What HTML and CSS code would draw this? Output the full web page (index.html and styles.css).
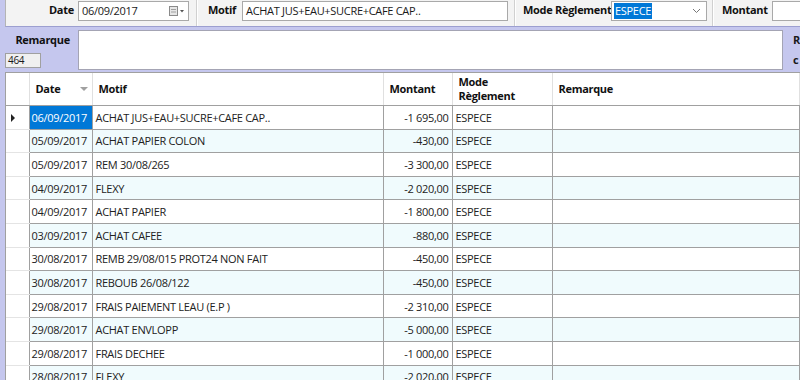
FILE: index.html
```html
<!DOCTYPE html>
<html lang="fr">
<head>
    <meta charset="UTF-8">
    <title>Dépenses</title>
    <link rel="stylesheet" href="styles.css">
</head>
<body>
    <div class="top-bar">
        <div class="field-group group-date">
            <label class="lbl lbl-date">Date</label>
            <div class="input date-input">
                <span>06/09/2017</span>
                <span class="cal-btn">
                    <svg width="16" height="10" viewBox="0 0 16 10">
                        <rect x="0.5" y="0.5" width="8" height="9" fill="#e6e6e6" stroke="#8a8a8a"/>
                        <line x1="2" y1="3.5" x2="7" y2="3.5" stroke="#a0a0a0"/>
                        <line x1="2" y1="6" x2="7" y2="6" stroke="#a0a0a0"/>
                        <path d="M11 4 L15 4 L13 6.5 Z" fill="#555"/>
                    </svg>
                </span>
            </div>
        </div>
        <div class="field-group group-motif">
            <label class="lbl">Motif</label>
            <div class="input motif-input">ACHAT JUS+EAU+SUCRE+CAFE CAP..</div>
        </div>
        <div class="field-group group-mode">
            <label class="lbl">Mode Règlement</label>
            <div class="input mode-select">
                <span class="selected-text">ESPECE</span>
                <svg class="chevron" width="9" height="6" viewBox="0 0 9 6">
                    <path d="M1 1 L4.5 4.5 L8 1" fill="none" stroke="#777" stroke-width="1"/>
                </svg>
            </div>
        </div>
        <div class="field-group group-montant">
            <label class="lbl">Montant</label>
            <div class="input montant-input"></div>
        </div>
    </div>

    <div class="remark-row">
        <div class="remark-left">
            <label class="lbl">Remarque</label>
            <div class="count-box">464</div>
        </div>
        <div class="remark-box"></div>
        <div class="remark-right">
            <span>R</span>
            <span>c</span>
        </div>
    </div>

    <div class="grid">
        <table>
            <colgroup>
                <col class="c-sel">
                <col class="c-date">
                <col class="c-motif">
                <col class="c-montant">
                <col class="c-mode">
                <col>
            </colgroup>
            <thead>
                <tr>
                    <th></th>
                    <th class="sortable">Date<span class="sort-arrow"></span></th>
                    <th>Motif</th>
                    <th>Montant</th>
                    <th>Mode<br>Règlement</th>
                    <th>Remarque</th>
                </tr>
            </thead>
            <tbody id="rows"></tbody>
        </table>
    </div>

    <script>
        const data = [
            ['06/09/2017', 'ACHAT JUS+EAU+SUCRE+CAFE CAP..', '-1 695,00'],
            ['05/09/2017', 'ACHAT PAPIER COLON', '-430,00'],
            ['05/09/2017', 'REM 30/08/265', '-3 300,00'],
            ['04/09/2017', 'FLEXY', '-2 020,00'],
            ['04/09/2017', 'ACHAT PAPIER', '-1 800,00'],
            ['03/09/2017', 'ACHAT CAFEE', '-880,00'],
            ['30/08/2017', 'REMB 29/08/015 PROT24 NON FAIT', '-450,00'],
            ['30/08/2017', 'REBOUB 26/08/122', '-450,00'],
            ['29/08/2017', 'FRAIS PAIEMENT LEAU (E.P )', '-2 310,00'],
            ['29/08/2017', 'ACHAT ENVLOPP', '-5 000,00'],
            ['29/08/2017', 'FRAIS DECHEE', '-1 000,00'],
            ['28/08/2017', 'FLEXY', '-2 020,00']
        ];

        const tbody = document.getElementById('rows');
        data.forEach((row, i) => {
            const tr = document.createElement('tr');
            if (i % 2 === 1) tr.className = 'alt';
            const sel = i === 0 ? '<span class="row-arrow"></span>' : '';
            const dateClass = i === 0 ? 'date current' : 'date';
            tr.innerHTML = `<td class="sel">${sel}</td>` +
                `<td class="${dateClass}">${row[0]}</td>` +
                `<td>${row[1]}</td>` +
                `<td class="num">${row[2]}</td>` +
                `<td>ESPECE</td>` +
                `<td></td>`;
            tbody.appendChild(tr);
        });
    </script>
</body>
</html>
```

FILE: styles.css
```css
body {
    margin: 0;
    padding: 0;
    background: #c5c7ee;
    font-family: "Open Sans", "Noto Sans", Arial, sans-serif;
    font-size: 11px;
    letter-spacing: -0.3px;
    color: #1a1a1a;
    overflow: hidden;
    width: 800px;
    height: 380px;
}
.top-bar {
    display: flex;
    height: 27px;
    margin-left: 5px;
    background: #f3f3f3;
    border-left: 1px solid #b4b4b4;
    border-bottom: 1px solid #9c9fd0;
    box-sizing: border-box;
}
.field-group {
    display: flex;
    align-items: flex-start;
    height: 100%;
    box-sizing: border-box;
    border-right: 1px solid #d0d0d0;
    box-shadow: 1px 0 0 #ffffff;
}
.lbl {
    font-weight: bold;
    color: #111;
    line-height: 20px;
    white-space: nowrap;
}
.input {
    height: 20px;
    margin-top: 1px;
    box-sizing: border-box;
    background: #fff;
    border: 1px solid #a9a9a9;
    line-height: 18px;
    padding: 0 3px;
    white-space: nowrap;
    overflow: hidden;
}
.group-date {
    width: 191px;
    padding-left: 43px;
}
.group-date .lbl {
    width: 29px;
}
.date-input {
    width: 111px;
    display: flex;
    justify-content: space-between;
    align-items: center;
}
.cal-btn {
    display: flex;
    align-items: center;
}
.group-motif {
    width: 318px;
    padding-left: 11px;
}
.group-motif .lbl {
    width: 34px;
}
.motif-input {
    width: 266px;
}
.group-mode {
    width: 198px;
    padding-left: 8px;
}
.group-mode .lbl {
    width: 88px;
}
.mode-select {
    width: 96px;
    padding: 0 2px;
    display: flex;
    align-items: center;
    justify-content: space-between;
}
.selected-text {
    background: #0078d7;
    color: #fff;
    line-height: 16px;
    padding: 0 1px;
}
.chevron {
    margin-right: 3px;
}
.group-montant {
    flex: 1;
    padding-left: 9px;
    border-right: none;
    box-shadow: none;
}
.group-montant .lbl {
    width: 50px;
}
.montant-input {
    flex: 1;
    border-right: none;
}
.remark-row {
    display: flex;
    height: 44px;
    padding-top: 3px;
    box-sizing: border-box;
}
.remark-left {
    width: 78px;
    display: flex;
    flex-direction: column;
    justify-content: space-between;
}
.remark-left .lbl {
    text-align: right;
    padding-right: 8px;
    line-height: 16px;
    margin-top: 2px;
}
.count-box {
    width: 36px;
    height: 15px;
    margin-left: 5px;
    margin-bottom: 3px;
    box-sizing: border-box;
    background: #f0f0f0;
    border: 1px solid #a0a0a0;
    font-size: 10px;
    line-height: 13px;
    padding-left: 2px;
}
.remark-box {
    width: 706px;
    height: 40px;
    box-sizing: border-box;
    background: #fff;
    border: 1px solid #a4a4b4;
}
.remark-right {
    display: flex;
    flex-direction: column;
    padding-left: 10px;
    font-weight: bold;
    line-height: 20px;
}
.grid {
    margin-left: 5px;
    margin-top: 1px;
    background: #fff;
    border-top: 1px solid #a0a0a0;
    border-left: 1px solid #a0a0a0;
}
table {
    border-collapse: collapse;
    table-layout: fixed;
    width: 100%;
}
.c-sel { width: 23px; }
.c-date { width: 63px; }
.c-motif { width: 291px; }
.c-montant { width: 69px; }
.c-mode { width: 100px; }
th {
    height: 32px;
    text-align: left;
    font-weight: bold;
    padding: 0 6px;
    line-height: 14px;
    background: #fff;
    border-right: 1px solid #e0e0e0;
    border-bottom: 1px solid #a0a0a0;
    color: #111;
    position: relative;
}
.sort-arrow {
    position: absolute;
    right: 4px;
    top: 14px;
    border-left: 4px solid transparent;
    border-right: 4px solid transparent;
    border-top: 4px solid #a0a0a0;
}
td {
    height: 22.6px;
    padding: 0 3px;
    border-right: 1px solid #a0a0a0;
    border-bottom: 1px solid #a0a0a0;
    white-space: nowrap;
    overflow: hidden;
    color: #222;
}
tr.alt td {
    background: #f0fbfd;
}
td.sel {
    background: #fff !important;
    border-right: 1px solid #a0a0a0;
    border-bottom: 1px solid #e4e4e4;
    position: relative;
}
.row-arrow {
    position: absolute;
    left: 5px;
    top: 8px;
    border-top: 4px solid transparent;
    border-bottom: 4px solid transparent;
    border-left: 4px solid #222;
}
td.date {
    padding-left: 2px;
}
td.current {
    background: #0078d7;
    color: #fff;
}
td.num {
    text-align: right;
}
```
